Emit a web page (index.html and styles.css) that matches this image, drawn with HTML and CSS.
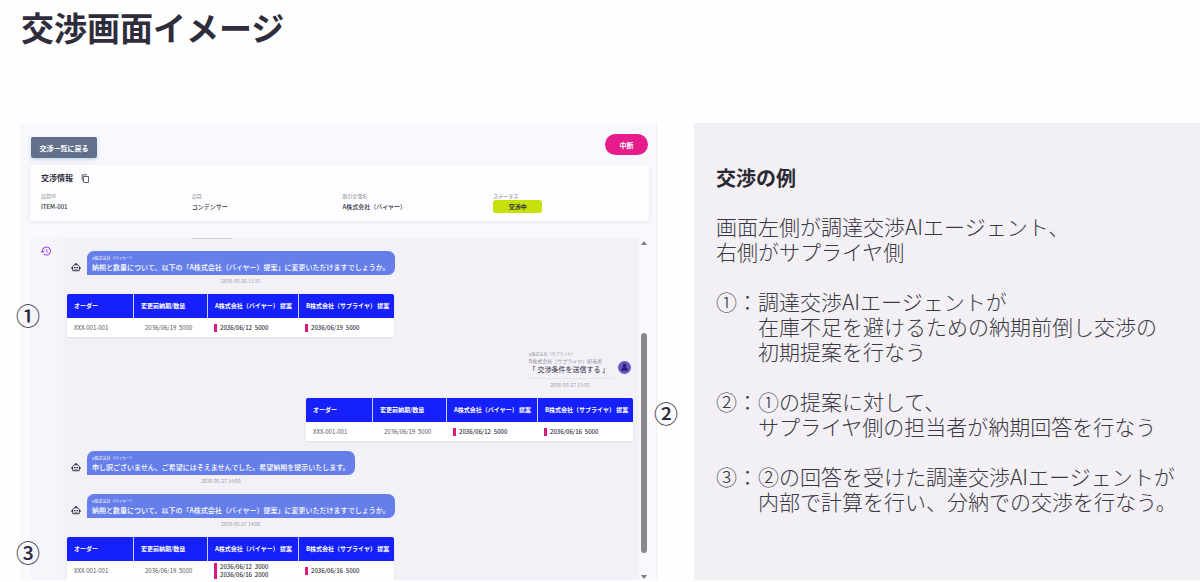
FILE: index.html
```html
<!DOCTYPE html>
<html lang="ja">
	<head>
		<meta charset="UTF-8">
		<title>交渉画面イメージ</title>
		<link rel="stylesheet" href="styles.css">
	</head>
	<body>
		<h1 class="title">交渉画面イメージ</h1>
		<main class="main">
			<div class="demo">
				<section class="screen">
					<header class="bar">
						<button type="button" class="back">交渉一覧に戻る</button>
						<button type="button" class="stop">中断</button>
					</header>
					<div class="info">
						<h2>
							交渉情報
							<svg class="copy" viewBox="0 0 24 24"><path d="M16 1H4a2 2 0 0 0-2 2v14h2V3h12zM19 5H8a2 2 0 0 0-2 2v14a2 2 0 0 0 2 2h11a2 2 0 0 0 2-2V7a2 2 0 0 0-2-2zm0 16H8V7h11z"/></svg>
						</h2>
						<dl>
							<div><dt>品目ID</dt><dd>ITEM-001</dd></div>
							<div><dt>品目</dt><dd>コンデンサー</dd></div>
							<div><dt>取引企業名</dt><dd>A株式会社（バイヤー）</dd></div>
							<div><dt>ステータス</dt><dd class="status">交渉中</dd></div>
						</dl>
					</div>
					<div class="chat">
						<div class="side">
							<svg class="history" viewBox="0 0 24 24"><path d="M13 3a9 9 0 0 0-9 9H1l4 4 4-4H6a7 7 0 1 1 2 5l-1.400 1.400A9 9 0 1 0 13 3zm-1 5v5l4.300 2.500.7-1.200-3.500-2.100V8z"/></svg>
						</div>
						<div class="list">
							<div class="msg">
								<svg class="bot" viewBox="0 0 24 24"><path fill-rule="evenodd" d="M12 2l4 4a7 7 0 0 1 5 6h2v5h-2v2a3 3 0 0 1-3 3H6a3 3 0 0 1-3-3v-2H1v-5h2a7 7 0 0 1 5-6zM5 12v8h14v-8a4 4 0 0 0-4-4H9a4 4 0 0 0-4 4zM7 12h4v3H7zm6 0h4v3h-4zM8 17h8v1H8z"/></svg>
								<div class="body">
									<p class="bubble"><small>A株式会社（バイヤー）</small>納期と数量について、以下の「A株式会社（バイヤー）提案」に変更いただけますでしょうか。</p>
									<time>2036-05-26 11:15</time>
								</div>
							</div>
							<table>
								<thead>
									<tr><th class="c1">オーダー</th><th class="c2">変更前納期/数量</th><th class="c3">A株式会社（バイヤー） 提案</th><th class="c4">B株式会社（サプライヤ） 提案</th></tr>
								</thead>
								<tbody>
									<tr><td>XXX-001-001</td><td class="old">2036/06/19&nbsp; 5000</td><td class="new"><span>2036/06/12&nbsp; 5000</span></td><td class="new"><span>2036/06/19&nbsp; 5000</span></td></tr>
								</tbody>
							</table>
							<div class="msg right">
								<div class="body">
									<p class="reply"><small>B株式会社（サプライヤ）</small><span>B株式会社（サプライヤ）担当者</span>「 交渉条件を送信する 」</p>
									<time>2036-05-27 13:55</time>
								</div>
								<svg class="user" viewBox="0 0 24 24"><circle cx="12" cy="12" r="12" fill="#6456c4"/><path fill="#29206f" d="M12 5a3.500 3.500 0 0 1 2 6.300c1 1.700 4 2.200 4 4.700v2H6v-2c0-2.500 3-3 4-4.700A3.500 3.500 0 0 1 12 5z"/></svg>
							</div>
							<table class="to-right">
								<thead>
									<tr><th class="c1">オーダー</th><th class="c2">変更前納期/数量</th><th class="c3">A株式会社（バイヤー） 提案</th><th class="c4">B株式会社（サプライヤ） 提案</th></tr>
								</thead>
								<tbody>
									<tr><td>XXX-001-001</td><td class="old">2036/06/19&nbsp; 5000</td><td class="new"><span>2036/06/12&nbsp; 5000</span></td><td class="new"><span>2036/06/16&nbsp; 5000</span></td></tr>
								</tbody>
							</table>
							<div class="msg">
								<svg class="bot" viewBox="0 0 24 24"><path fill-rule="evenodd" d="M12 2l4 4a7 7 0 0 1 5 6h2v5h-2v2a3 3 0 0 1-3 3H6a3 3 0 0 1-3-3v-2H1v-5h2a7 7 0 0 1 5-6zM5 12v8h14v-8a4 4 0 0 0-4-4H9a4 4 0 0 0-4 4zM7 12h4v3H7zm6 0h4v3h-4zM8 17h8v1H8z"/></svg>
								<div class="body">
									<p class="bubble"><small>A株式会社（バイヤー）</small>申し訳ございません、ご希望にはそえませんでした。希望納期を提示いたします。</p>
									<time>2036-05-27 14:00</time>
								</div>
							</div>
							<div class="msg">
								<svg class="bot" viewBox="0 0 24 24"><path fill-rule="evenodd" d="M12 2l4 4a7 7 0 0 1 5 6h2v5h-2v2a3 3 0 0 1-3 3H6a3 3 0 0 1-3-3v-2H1v-5h2a7 7 0 0 1 5-6zM5 12v8h14v-8a4 4 0 0 0-4-4H9a4 4 0 0 0-4 4zM7 12h4v3H7zm6 0h4v3h-4zM8 17h8v1H8z"/></svg>
								<div class="body">
									<p class="bubble"><small>A株式会社（バイヤー）</small>納期と数量について、以下の「A株式会社（バイヤー）提案」に変更いただけますでしょうか。</p>
									<time>2036-05-27 14:00</time>
								</div>
							</div>
							<table>
								<thead>
									<tr><th class="c1">オーダー</th><th class="c2">変更前納期/数量</th><th class="c3">A株式会社（バイヤー） 提案</th><th class="c4">B株式会社（サプライヤ） 提案</th></tr>
								</thead>
								<tbody>
									<tr><td>XXX-001-001</td><td class="old">2036/06/19&nbsp; 5000</td><td class="new"><span>2036/06/12&nbsp; 3000</span><span>2036/06/16&nbsp; 2000</span></td><td class="new"><span>2036/06/16&nbsp; 5000</span></td></tr>
								</tbody>
							</table>
						</div>
						<div class="scroll">
							<i class="up"></i>
							<i class="thumb"></i>
							<i class="down"></i>
						</div>
					</div>
				</section>
				<!-- 画面の上に重ねる番号 -->
				<b class="no no1">①</b>
				<b class="no no2">②</b>
				<b class="no no3">③</b>
			</div>
			<section class="notes">
				<h2>交渉の例</h2>
				<p>画面左側が調達交渉AIエージェント、<br>右側がサプライヤ側</p>
				<ul>
					<li><span>①：</span><p>調達交渉AIエージェントが<br>在庫不足を避けるための納期前倒し交渉の<br>初期提案を行なう</p></li>
					<li><span>②：</span><p>①の提案に対して、<br>サプライヤ側の担当者が納期回答を行なう</p></li>
					<li><span>③：</span><p>②の回答を受けた調達交渉AIエージェントが<br>内部で計算を行い、分納での交渉を行なう。</p></li>
				</ul>
			</section>
		</main>
	</body>
</html>
```
FILE: styles.css
```css
*{
	box-sizing: border-box;
}
body{
	margin: 0;
	background-color: #fefefe;
	color: #2f2d3b;
	font-family: "Noto Sans CJK JP","Noto Sans",sans-serif;
}
h1,h2,p,dl,dd,ul{
	margin: 0;
	padding: 0;
}
svg{
	display: block;
	fill: currentColor;
}
button{
	border: none;
	font-family: inherit;
	font-weight: bold;
	color: #fff;
	cursor: pointer;
}
.title{
	padding: 3px 21px 72px;
	font-size: 33px;
	line-height: 48px;
}
.main{
	display: grid;
	grid-template-columns: 694fr 506fr;
}

/* 左側：交渉画面 */
.demo{
	position: relative;
	padding: 0 37px 0 20px;
}
.screen{
	padding: 11px 7px 0 10px;
	background-color: #f8f8fd;
	border-right: 1px solid #f1f0f8;
}
.bar{
	display: flex;
	justify-content: space-between;
	height: 24px;
	padding: 0 1px;
}
.back{
	align-self: flex-end;
	width: 66px;
	height: 21px;
	padding: 0;
	border-radius: 2px;
	background-color: #62708c;
	box-shadow: 0 2px 4px #c9d8f2;
	font-size: 7px;
}
.stop{
	width: 43px;
	height: 21px;
	padding: 0;
	border-radius: 11px;
	background-color: #e61c8d;
	font-size: 7px;
}
.info{
	height: 56px;
	margin-top: 7px;
	padding: 8px 5px 0 11px;
	border-radius: 3px;
	background-color: #fdfdff;
	box-shadow: 0 1px 4px #e6e5f0;
}
.info h2{
	display: flex;
	align-items: center;
	gap: 8px;
	font-size: 8px;
	line-height: 10px;
}
.copy{
	width: 9px;
	height: 9px;
}
.info dl{
	display: grid;
	grid-template-columns: repeat(4,1fr);
	margin-top: 9px;
}
.info dt{
	font-size: 5px;
	line-height: 8px;
	color: #85838e;
}
.info dd{
	font-size: 6px;
	line-height: 13px;
	font-weight: 500;
}
.info .status{
	width: 49px;
	height: 13px;
	border-radius: 3px;
	background-color: #c6e009;
	text-align: center;
	font-weight: bold;
}
.chat{
	display: flex;
	margin-top: 17px;
}
.side{
	width: 33px;
	padding: 7px 10px;
	background-color: #f6f5fb;
}
.history{
	width: 12px;
	height: 12px;
	color: #9a47f0;
}
.list{
	flex: 1;
	padding: 13px 6px 0 4px;
	background-color: #f3f1f8;
}
/* 前のメッセージの下端 */
.list::before{
	content: "";
	display: block;
	width: 40px;
	height: 1px;
	margin: -13px 0 12px 125px;
	background-color: #cfcdd6;
}
.msg{
	display: flex;
	align-items: flex-start;
	gap: 6px;
	margin-bottom: 7px;
	padding-left: 4px;
}
.bot{
	width: 10px;
	height: 10px;
	margin-top: 11px;
	color: #33313c;
}
.body{
	text-align: center;
}
.bubble{
	height: 24px;
	padding: 5px 5px 0;
	border-radius: 7px 7px 7px 0;
	background-color: #667eea;
	color: #fff;
	font-size: 7px;
	font-weight: 500;
	line-height: 12px;
	text-align: left;
	white-space: nowrap;
}
.msg small{
	display: block;
	font-size: 4px;
	line-height: 5px;
	font-weight: normal;
}
.msg time{
	display: block;
	font-size: 5px;
	line-height: 12px;
	color: #9b99a5;
}
.right{
	justify-content: flex-end;
	gap: 4px;
}
.reply{
	height: 32px;
	padding: 5px 5px 0 3px;
	border-bottom: 1px solid #e6e4ec;
	font-size: 7px;
	line-height: 10px;
	text-align: left;
}
.reply small,
.reply span{
	color: #8f8d98;
}
.reply span{
	display: block;
	font-size: 5px;
	line-height: 7px;
}
.user{
	width: 13px;
	height: 13px;
	margin: 14px 2px 0 0;
}
table{
	width: 327px;
	margin-bottom: 10px;
	border-collapse: separate;
	border-spacing: 0;
	table-layout: fixed;
	background-color: #fff;
	box-shadow: 0 1px 2px #dddbe4;
	font-size: 6px;
	line-height: 8px;
}
table:last-child{
	margin-bottom: 0;
}
.to-right{
	margin-left: auto;
}
th,td{
	padding: 0 0 0 7px;
	text-align: left;
	white-space: nowrap;
}
th{
	height: 24px;
	border-left: 1px solid #c9ccff;
	background-color: #1620fa;
	color: #fff;
}
th:first-child{
	border-left: none;
	border-top-left-radius: 2px;
}
th:last-child{
	border-top-right-radius: 2px;
}
.c1{width: 66px;}
.c2{width: 74px;}
.c3{width: 91px;}
.c4{width: 96px;}
td{
	height: 19px;
	color: #55535e;
}
.old{
	padding-left: 12px;
}
.new{
	font-weight: 500;
	color: #2f2d3b;
}
.new span{
	display: block;
	width: 80px;
	padding-left: 3px;
	border-left: 3px solid #d91a7c;
}
.scroll{
	display: flex;
	flex-direction: column;
	align-items: center;
	width: 10px;
	padding: 3px 0 1px;
}
.up,
.down{
	border: 3px solid transparent;
}
.up{
	border-top: none;
	border-bottom: 4px solid #7d7d85;
}
.down{
	border-bottom: none;
	border-top: 4px solid #7d7d85;
}
.thumb{
	width: 6px;
	height: 65%;
	margin: auto 0 22px;
	border-radius: 3px;
	background-color: #88888d;
}
.no{
	position: absolute;
	font-size: 24px;
	line-height: 24px;
	font-weight: 500;
}
.no1{
	left: 16px;
	top: 180px;
}
.no2{
	right: 16px;
	top: 278px;
}
.no3{
	left: 16px;
	top: 417px;
}

/* 右側：説明 */
.notes{
	padding: 42px 0 0 22px;
	background-color: #f2f0f5;
	color: #3a3842;
	font-size: 21px;
	font-weight: 300;
	line-height: 25px;
	white-space: nowrap;
}
.notes h2{
	margin-bottom: 24px;
	font-size: 20px;
	color: #2b2932;
}
.notes ul{
	list-style: none;
}
.notes li{
	display: flex;
	margin-top: 25px;
}
```
